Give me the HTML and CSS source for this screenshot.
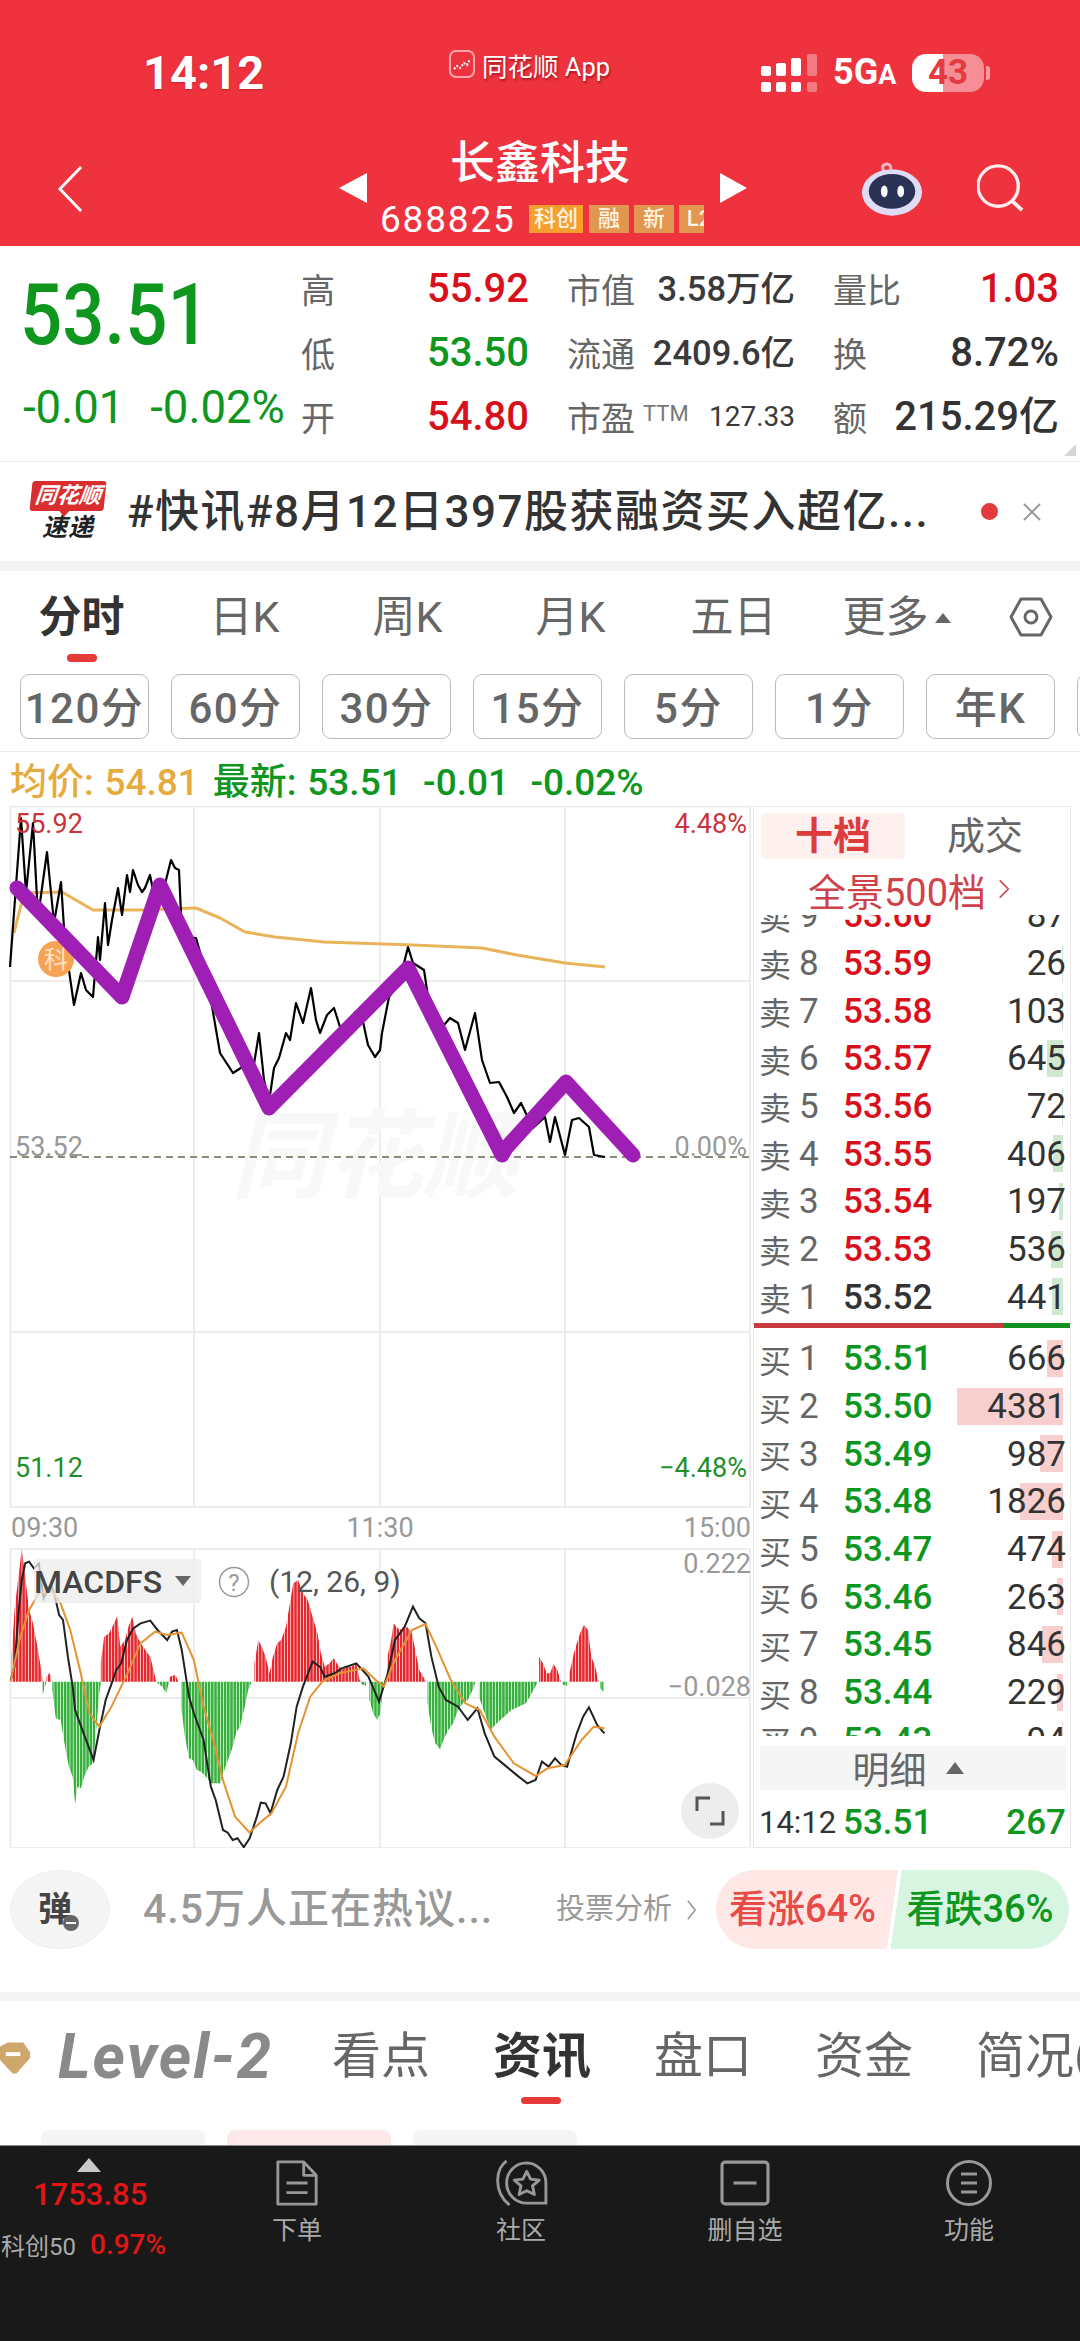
FILE: index.html
```html
<!DOCTYPE html>
<html lang="zh">
<head>
<meta charset="utf-8">
<title>长鑫科技</title>
<link rel="stylesheet" href="styles.css">
</head>
<body>
<div class="page">
  <header class="hero">
    <div class="status">
      <div class="time">14:12</div>
      <div class="appmark">
        <svg class="applogo" viewBox="0 0 26 28"><rect x="1" y="1" width="24" height="26" rx="6" fill="#ee3340" stroke="#f7a7a9" stroke-width="2"/><path d="M5 19l3-3 3 2 4-5 3 2 3-6" fill="none" stroke="#fff" stroke-width="2" stroke-dasharray="2 1.5"/></svg>
        <span>同花顺 App</span>
      </div>
      <div class="sys">
        <svg class="signal" viewBox="0 0 58 38"><g fill="#fff"><rect x="0" y="12" width="10" height="10" rx="2"/><rect x="15" y="9" width="10" height="13" rx="2"/><rect x="30" y="4" width="10" height="18" rx="2"/><rect x="0" y="28" width="10" height="10" rx="2"/><rect x="15" y="28" width="10" height="10" rx="2"/><rect x="30" y="28" width="10" height="10" rx="2"/></g><g fill="#fff" opacity=".35"><rect x="46" y="0" width="10" height="22" rx="2"/><rect x="46" y="28" width="10" height="10" rx="2"/></g></svg>
        <div class="net">5G<small>A</small></div>
        <div class="batt">43</div>
        <i class="batt-tip"></i>
      </div>
    </div>
    <nav class="navrow">
      <div class="nav-left">
        <svg class="back" viewBox="0 0 28 50"><path d="M25 2L3 25l22 23" fill="none" stroke="#fff" stroke-width="3"/></svg>
      </div>
      <div class="nav-mid">
        <i class="tri-left"></i>
        <div class="stock">
          <div class="stock-name">长鑫科技</div>
          <div class="stock-code"><span class="code">688825</span><span class="tag tag-a">科创</span><span class="tag">融</span><span class="tag">新</span><span class="tag tag-cut">L2</span></div>
        </div>
        <i class="tri-right"></i>
      </div>
      <div class="nav-right">
        <svg class="robot" viewBox="0 0 64 56"><path d="M28 13c-6-3-8-8-3-10 4-1 7 2 5 5" fill="none" stroke="#f6b6c4" stroke-width="3"/><ellipse cx="32" cy="32" rx="31" ry="24" fill="#dfdcf6"/><ellipse cx="32" cy="31" rx="24" ry="18" fill="#2a3256"/><ellipse cx="24" cy="31" rx="3.5" ry="6" fill="#fff"/><ellipse cx="41" cy="31" rx="3.5" ry="6" fill="#fff"/></svg>
        <svg class="search" viewBox="0 0 50 50"><circle cx="22" cy="23" r="21" fill="none" stroke="#ffecec" stroke-width="3.5"/><path d="M37 39l10 9" stroke="#ffecec" stroke-width="4" fill="none"/></svg>
      </div>
    </nav>
  </header>

  <section class="quote">
    <div class="quote-main">
      <div class="last">53.51</div>
      <div class="change"><span>-0.01</span><span>-0.02%</span></div>
    </div>
    <div class="stats">
      <div class="stat"><label>高</label><b class="up">55.92</b></div>
      <div class="stat"><label>市值</label><b class="mid">3.58万亿</b></div>
      <div class="stat"><label>量比</label><b class="up">1.03</b></div>
      <div class="stat"><label>低</label><b class="down">53.50</b></div>
      <div class="stat"><label>流通</label><b class="mid">2409.6亿</b></div>
      <div class="stat"><label>换</label><b class="dark">8.72%</b></div>
      <div class="stat"><label>开</label><b class="up">54.80</b></div>
      <div class="stat"><label>市盈<sup>TTM</sup></label><b class="small">127.33</b></div>
      <div class="stat"><label>额</label><b class="dark">215.29亿</b></div>
    </div>
    <i class="corner"></i>
  </section>

  <section class="news">
    <div class="newslogo"><div class="newslogo-top">同花顺</div><div class="newslogo-sub">速递</div></div>
    <div class="news-text">#快讯#8月12日397股获融资买入超亿...</div>
    <i class="news-dot"></i>
    <svg class="news-x" viewBox="0 0 18 18"><path d="M1 1l16 16M17 1L1 17" stroke="#999" stroke-width="2"/></svg>
  </section>

  <div class="band"></div>

  <div class="periods">
    <div class="period period-on">分时</div>
    <div class="period">日K</div>
    <div class="period">周K</div>
    <div class="period">月K</div>
    <div class="period">五日</div>
    <div class="period period-more">更多<i></i></div>
    <div class="period-gear"><svg viewBox="0 0 44 40"><path d="M12 2h20l10 18-10 18H12L2 20z" fill="none" stroke="#666" stroke-width="3" stroke-linejoin="round"/><circle cx="22" cy="20" r="6" fill="none" stroke="#666" stroke-width="3"/></svg></div>
  </div>

  <div class="pills">
    <div class="pill">120分</div><div class="pill">60分</div><div class="pill">30分</div><div class="pill">15分</div><div class="pill">5分</div><div class="pill">1分</div><div class="pill">年K</div><div class="pill"></div>
  </div>

  <div class="legend">
    <span class="legend-avg">均价: 54.81</span>
    <span class="legend-new">最新: 53.51&nbsp; -0.01&nbsp; -0.02%</span>
  </div>

  <section class="market">
    <svg class="chart" viewBox="0 806 752 1042">
      <defs>
        <pattern id="barsR" patternUnits="userSpaceOnUse" width="6.6" height="10"><rect width="5.2" height="10" fill="#e6272d"/></pattern>
        <pattern id="barsG" patternUnits="userSpaceOnUse" width="6.6" height="10"><rect width="5.2" height="10" fill="#35b13c"/></pattern>
      </defs>
      <g class="gridline">
        <path d="M10 806.5H750M10 981H750M10 1332H750M10 1507H750M10 1549H750M10 1698H750M10 1848H750"/>
        <path d="M10.5 806V1507M194 806V1507M380 806V1507M565 806V1507M750 806V1507M10.5 1549V1848M194 1549V1848M380 1549V1848M565 1549V1848M750 1549V1848"/>
      </g>
      <text class="watermark" x="231" y="1190">同花顺</text>
      <path class="zero" d="M10 1157H750"/>
      <polyline class="avgline" points="14,933 24,893 62,892 93,910 138,910 196,908 220,918 245,932 275,937 324,942 413,945 482,948 517,955 565,963 605,967"/>
      <polyline class="priceline" points="10,967 21,818 26,893 33,823 38,917 47,852 54,923 61,882 65,943 74,1005 81,973 86,990 93,997 98,937 100,960 105,903 108,945 112,920 118,888 122,915 127,875 130,892 133,870 138,885 142,892 145,888 150,875 155,900 162,893 166,880 171,860 175,868 179,870 182,937 196,938 207,977 220,1053 233,1073 250,1062 253,1070 259,1033 264,1080 269,1102 274,1068 279,1058 286,1033 290,1040 296,1003 303,1023 311,988 316,1020 320,1033 327,1015 334,1008 341,1030 348,1033 355,1012 362,1017 368,1045 375,1057 380,1050 382,1033 389,997 399,983 408,947 413,963 424,970 430,1010 444,1025 450,1018 458,1023 465,1050 475,1013 482,1060 490,1083 499,1082 507,1097 514,1113 521,1103 533,1128 545,1117 550,1142 555,1117 565,1155 572,1120 579,1118 589,1127 594,1155 605,1157"/>
      <circle class="badge" cx="56" cy="959" r="18"/>
      <text class="badge-text" x="44" y="968">科</text>
      <text class="ax ax-up" x="15" y="833">55.92</text>
      <text class="ax ax-up" x="747" y="833" text-anchor="end">4.48%</text>
      <text class="ax ax-mid" x="15" y="1156">53.52</text>
      <text class="ax ax-mid" x="747" y="1156" text-anchor="end">0.00%</text>
      <text class="ax ax-down" x="15" y="1477">51.12</text>
      <text class="ax ax-down" x="747" y="1477" text-anchor="end">−4.48%</text>
      <text class="ax ax-mid" x="11" y="1537">09:30</text>
      <text class="ax ax-mid" x="380" y="1537" text-anchor="middle">11:30</text>
      <text class="ax ax-mid" x="751" y="1537" text-anchor="end">15:00</text>
      <text class="ax ax-mid" x="751" y="1573" text-anchor="end">0.222</text>
      <text class="ax ax-mid" x="751" y="1696" text-anchor="end">−0.028</text>
      <g transform="translate(0 1500) scale(.4847 .3333)">
        <path fill="url(#barsR)" d="M24 545V470L30 330 38 230 45 148 52 230 60 330 68 370 76 430 84 500 88 545ZM96 545V530L103 518 106 545ZM208 545V485L215 410 225 400 232 380 242 348 248 440 258 420 265 380 273 350 280 400 290 430 300 450 310 470 320 530 322 545ZM350 545V530L362 525 368 545ZM525 545V490L533 420 540 440 548 470 556 520 563 470 572 430 580 420 590 380 597 320 605 250 615 240 625 280 635 300 645 350 655 400 662 460 670 500 680 490 688 475 695 490 705 510 715 500 725 500 735 490 742 540 745 545ZM800 545V465L807 420 812 370 820 385 830 390 840 380 850 400 858 460 865 510 875 535 878 545ZM1112 545V470L1120 490 1128 520 1135 520 1142 492 1150 510 1157 545ZM1175 545V520L1183 465 1190 430 1198 395 1205 375 1213 390 1220 470 1228 500 1235 545Z"/>
        <path fill="url(#barsG)" d="M88 545V583L95 548V545ZM108 545V570L115 655 125 660 133 730 142 800 150 830 155 912 160 860 167 865 175 825 183 800 192 790 198 700 204 590 208 550V545ZM325 545V550L335 560 343 580 348 550V545ZM374 545V625L382 715 390 775 398 780 406 810 415 815 425 830 435 850 445 850 455 850 465 800 478 750 488 695 495 680 505 620 512 570 518 550V545ZM745 545V552L755 558V545ZM762 545V600L770 640 778 660 785 640 790 560V545ZM882 545V608L890 685 898 730 908 748 915 720 925 690 935 670 945 630 955 610 965 600 975 570 980 550V545ZM988 545V590L1000 640 1012 690 1025 670 1040 650 1055 630 1070 620 1085 610 1095 585 1108 550V545ZM1160 545V553L1170 558V545ZM1238 545V565L1245 575V545Z"/>
        <polyline class="macd-dif" points="22,540 30,500 38,340 45,240 52,190 60,185 70,205 80,190 90,295 105,250 115,300 122,345 130,360 140,470 150,560 155,630 165,670 175,710 193,780 205,690 218,600 228,560 240,510 250,490 262,420 275,385 290,370 310,362 325,390 345,420 355,395 365,390 375,450 390,590 400,640 420,720 435,860 445,900 460,990 470,998 480,1020 490,1015 503,1042 515,1015 530,950 538,908 548,910 558,940 572,870 585,830 600,730 612,620 625,560 645,485 660,500 670,530 690,520 705,505 735,490 760,530 782,605 800,520 815,420 835,380 852,320 865,355 878,370 890,470 905,560 920,600 945,620 965,660 985,625 1000,700 1020,770 1045,800 1070,830 1088,850 1105,840 1118,785 1132,800 1145,775 1158,795 1170,800 1190,700 1203,650 1215,622 1232,675 1247,700"/>
        <polyline class="macd-dea" points="22,545 40,420 60,330 80,280 105,270 125,310 145,390 165,510 185,640 205,680 230,620 260,530 290,430 320,395 345,405 375,398 400,480 420,620 440,720 460,840 485,950 515,998 535,970 560,940 590,860 615,700 640,590 665,545 700,520 750,505 775,540 792,560 815,480 850,390 878,372 900,440 930,540 960,610 990,630 1020,710 1060,790 1105,828 1130,805 1165,795 1200,720 1225,680 1247,685"/>
      </g>
      <rect class="macd-chip" x="34" y="1559" width="167" height="44" rx="4"/>
      <text class="macd-name" x="34" y="1593">MACDFS</text>
      <path class="macd-caret" d="M175 1576h16l-8 10z"/>
      <circle class="macd-help" cx="234" cy="1582" r="14.5"/>
      <text class="macd-q" x="234" y="1591" text-anchor="middle">?</text>
      <text class="macd-param" x="269" y="1592">(12, 26, 9)</text>
      <polyline class="priceline-top" points="17,888 122,997 160,885 269,1108 408,968 502,1155 506,1148 566,1082 633,1155"/>
      <ellipse class="fs-btn" cx="710" cy="1811" rx="29" ry="28"/>
      <path class="fs-ico" d="M697 1811V1798H710M723 1811V1824H710"/>
    </svg>

    <div class="book">
      <div class="book-tabs"><div class="book-tab book-tab-on">十档</div><div class="book-tab">成交</div></div>
      <div class="book-all">全景500档 <svg viewBox="0 0 14 24"><path d="M2 2l10 10L2 22" fill="none" stroke="#d8494f" stroke-width="2"/></svg></div>
      <div class="levels levels-sell">
        <div class="lvl"><span class="lvl-name">卖<em>9</em></span><span class="lvl-price up">53.60</span><span class="lvl-qty">87</span></div>
        <div class="lvl"><span class="lvl-name">卖<em>8</em></span><span class="lvl-price up">53.59</span><span class="lvl-qty">26</span><i class="lvl-bar lvl-bar-s" style="width:1px"></i></div>
        <div class="lvl"><span class="lvl-name">卖<em>7</em></span><span class="lvl-price up">53.58</span><span class="lvl-qty">103</span><i class="lvl-bar lvl-bar-s" style="width:1px"></i></div>
        <div class="lvl"><span class="lvl-name">卖<em>6</em></span><span class="lvl-price up">53.57</span><span class="lvl-qty">645</span><i class="lvl-bar lvl-bar-s" style="width:16px"></i></div>
        <div class="lvl"><span class="lvl-name">卖<em>5</em></span><span class="lvl-price up">53.56</span><span class="lvl-qty">72</span><i class="lvl-bar lvl-bar-s" style="width:1px"></i></div>
        <div class="lvl"><span class="lvl-name">卖<em>4</em></span><span class="lvl-price up">53.55</span><span class="lvl-qty">406</span><i class="lvl-bar lvl-bar-s" style="width:10px"></i></div>
        <div class="lvl"><span class="lvl-name">卖<em>3</em></span><span class="lvl-price up">53.54</span><span class="lvl-qty">197</span><i class="lvl-bar lvl-bar-s" style="width:4px"></i></div>
        <div class="lvl"><span class="lvl-name">卖<em>2</em></span><span class="lvl-price up">53.53</span><span class="lvl-qty">536</span><i class="lvl-bar lvl-bar-s" style="width:12px"></i></div>
        <div class="lvl"><span class="lvl-name">卖<em>1</em></span><span class="lvl-price dark">53.52</span><span class="lvl-qty">441</span><i class="lvl-bar lvl-bar-s" style="width:11px"></i></div>
      </div>
      <div class="book-split"><i class="split-up"></i><i class="split-down"></i></div>
      <div class="levels levels-buy">
        <div class="lvl"><span class="lvl-name">买<em>1</em></span><span class="lvl-price down">53.51</span><span class="lvl-qty">666</span><i class="lvl-bar lvl-bar-b" style="width:16px"></i></div>
        <div class="lvl"><span class="lvl-name">买<em>2</em></span><span class="lvl-price down">53.50</span><span class="lvl-qty">4381</span><i class="lvl-bar lvl-bar-b" style="width:106px"></i></div>
        <div class="lvl"><span class="lvl-name">买<em>3</em></span><span class="lvl-price down">53.49</span><span class="lvl-qty">987</span><i class="lvl-bar lvl-bar-b" style="width:23px"></i></div>
        <div class="lvl"><span class="lvl-name">买<em>4</em></span><span class="lvl-price down">53.48</span><span class="lvl-qty">1826</span><i class="lvl-bar lvl-bar-b" style="width:43px"></i></div>
        <div class="lvl"><span class="lvl-name">买<em>5</em></span><span class="lvl-price down">53.47</span><span class="lvl-qty">474</span><i class="lvl-bar lvl-bar-b" style="width:11px"></i></div>
        <div class="lvl"><span class="lvl-name">买<em>6</em></span><span class="lvl-price down">53.46</span><span class="lvl-qty">263</span><i class="lvl-bar lvl-bar-b" style="width:6px"></i></div>
        <div class="lvl"><span class="lvl-name">买<em>7</em></span><span class="lvl-price down">53.45</span><span class="lvl-qty">846</span><i class="lvl-bar lvl-bar-b" style="width:21px"></i></div>
        <div class="lvl"><span class="lvl-name">买<em>8</em></span><span class="lvl-price down">53.44</span><span class="lvl-qty">229</span><i class="lvl-bar lvl-bar-b" style="width:6px"></i></div>
        <div class="lvl"><span class="lvl-name">买<em>9</em></span><span class="lvl-price down">53.43</span><span class="lvl-qty">94</span><i class="lvl-bar lvl-bar-b" style="width:1px"></i></div>
      </div>
      <div class="book-detail">明细<i></i></div>
      <div class="lvl lvl-last"><span class="lvl-time">14:12</span><span class="lvl-price down">53.51</span><span class="lvl-qty down">267</span></div>
    </div>
  </section>

  <section class="vote">
    <div class="danmu"><span>弹</span><i></i></div>
    <div class="vote-hot">4.5万人正在热议...</div>
    <div class="vote-link">投票分析<svg viewBox="0 0 12 24"><path d="M2 2l8 10-8 10" fill="none" stroke="#999" stroke-width="1.8"/></svg></div>
    <div class="vote-bar">
      <div class="vote-up">看涨64%</div>
      <div class="vote-down">看跌36%</div>
    </div>
  </section>

  <div class="band band-2"></div>

  <div class="infotabs">
    <svg class="gem" viewBox="0 0 32 32"><path d="M0 4L8 0H24L31 10V16L17 32H13L0 18Z" fill="#cfa76c"/><rect x="6" y="10" width="15" height="4" fill="#fff"/></svg>
    <div class="level2">Level-2</div>
    <div class="infotab">看点</div>
    <div class="infotab infotab-on">资讯</div>
    <div class="infotab">盘口</div>
    <div class="infotab">资金</div>
    <div class="infotab">简况(</div>
  </div>

  <div class="chips">
    <div class="chip"></div><div class="chip chip-on"></div><div class="chip"></div>
  </div>

  <footer class="dock">
    <div class="dock-index">
      <i class="dock-tri"></i>
      <div class="dock-val">1753.85</div>
      <div class="dock-line"><span>科创50</span><b>0.97%</b></div>
    </div>
    <div class="dock-item">
      <svg viewBox="0 0 46 48"><path d="M3 2h27l13 14v30H3zM30 2v14h13M12 24h22M12 34h22" fill="none" stroke="#989898" stroke-width="3" stroke-linejoin="round"/></svg>
      <span>下单</span>
    </div>
    <div class="dock-item">
      <svg viewBox="0 0 56 48"><path d="M34 3a21 21 0 0 0-21 21 21 21 0 0 0 21 21h20V24A21 21 0 0 0 34 3z" fill="none" stroke="#989898" stroke-width="3"/><path d="M13 1C2 8-2 32 16 47" fill="none" stroke="#989898" stroke-width="3"/><path d="M34 12l4 8 9 1-7 6 2 9-8-4-8 4 2-9-7-6 9-1z" fill="none" stroke="#989898" stroke-width="3" stroke-linejoin="round"/></svg>
      <span>社区</span>
    </div>
    <div class="dock-item">
      <svg viewBox="0 0 48 44"><rect x="2" y="2" width="44" height="40" rx="3" fill="none" stroke="#989898" stroke-width="3"/><path d="M13 22h22" stroke="#989898" stroke-width="3"/></svg>
      <span>删自选</span>
    </div>
    <div class="dock-item">
      <svg viewBox="0 0 46 46"><circle cx="23" cy="23" r="21.5" fill="none" stroke="#989898" stroke-width="3"/><path d="M15 14h16M15 23h16M15 32h16" stroke="#989898" stroke-width="3"/></svg>
      <span>功能</span>
    </div>
  </footer>
</div>
</body>
</html>
```

FILE: styles.css
```css
* { box-sizing: border-box; }
html, body { margin: 0; padding: 0; background: #fff; }
body { font-family: Roboto, "Noto Sans CJK SC", sans-serif; color: #333; }
i, em { font-style: normal; }
.page { width: 1080px; height: 2341px; overflow: hidden; display: flex; flex-direction: column; }

/* header */
.hero { height: 246px; background: #ee323e; color: #fff; flex: none; }
.status { height: 140px; display: flex; padding-left: 143px; position: relative; }
.time { width: 306px; font-size: 47px; font-weight: 700; line-height: 50px; padding-top: 48px; text-shadow: 0 1px 2px rgba(120,0,0,.35); }
.appmark { width: 312px; display: flex; align-items: center; height: 36px; margin-top: 46px; gap: 7px; font-size: 25.5px; text-shadow: 1px 2px 2px rgba(100,0,0,.5); white-space: nowrap; }
.applogo { width: 26px; height: 28px; }
.sys { display: flex; align-items: center; height: 38px; margin-top: 54px; }
.signal { width: 58px; height: 38px; }
.net { margin-left: 14px; width: 79px; font-size: 36px; font-weight: 700; line-height: 38px; white-space: nowrap; }
.net small { font-size: 27px; }
.batt { width: 72px; height: 38px; border-radius: 14px; background: linear-gradient(90deg, #fff 0 43%, rgba(255,255,255,.45) 43% 100%); color: #e53a42; font-size: 35px; font-weight: 700; line-height: 38px; text-align: center; }
.batt-tip { width: 4px; height: 14px; margin-left: 2px; background: rgba(255,255,255,.5); border-radius: 0 3px 3px 0; }
.navrow { height: 106px; display: flex; }
.nav-left { width: 339px; padding: 25px 0 0 57px; }
.back { width: 27px; height: 48px; display: block; }
.nav-mid { width: 408px; display: flex; align-items: flex-start; }
.tri-left, .tri-right { width: 0; height: 0; margin-top: 33px; border-top: 15px solid transparent; border-bottom: 15px solid transparent; }
.tri-left { border-right: 28px solid #fff; margin-right: 13px; }
.tri-right { border-left: 27px solid #fff; margin-left: 16px; }
.stock { width: 324px; }
.stock-name { font-size: 45px; line-height: 46px; text-align: center; font-weight: 500; padding-right: 4px; padding-top: 1px; height: 47px; }
.stock-code { display: flex; align-items: center; height: 28px; margin-top: 18px; overflow: hidden; white-space: nowrap; }
.code { font-size: 37px; letter-spacing: 1.8px; width: 149px; flex: none; }
.tag { flex: none; width: 40px; height: 28px; margin-right: 5px; background: #e2964f; color: #fff4e0; font-size: 22px; line-height: 28px; text-align: center; font-weight: 500; }
.tag-a { width: 54px; background: #f5a02e; margin-right: 6px; }
.nav-right { flex: 1; display: flex; align-items: flex-start; padding-left: 114px; }
.robot { width: 62px; height: 55px; margin-top: 21px; }
.search { width: 48px; height: 48px; margin: 24px 0 0 54px; }

/* quote */
.quote { height: 216px; flex: none; display: flex; position: relative; border-bottom: 1px solid #ececec; padding-top: 11px; }
.quote-main { width: 301px; padding-left: 20px; flex: none; }
.last { font-size: 85px; line-height: 90px; margin-top: 13px; color: #0e961e; font-weight: 500; transform: scaleX(.875); transform-origin: left center; }
.change { display: flex; gap: 26px; margin-top: 25px; padding-left: 3px; font-size: 45.5px; line-height: 46px; color: #0e961e; white-space: nowrap; }
.stats { display: grid; grid-template-columns: 228px 228px 226px; column-gap: 38px; grid-auto-rows: 64px; align-items: center; }
.stat { display: flex; justify-content: space-between; align-items: center; white-space: nowrap; }
.stat label { font-size: 34px; color: #666; line-height: 40px; padding-top: 3px; }
.stat sup { font-size: 22px; line-height: 0; vertical-align: 10px; margin-left: 8px; color: #777; }
.stat b { font-size: 40px; font-weight: 500; line-height: 44px; }
.stat b.mid { font-size: 34.5px; color: #3a3a3a; }
.stat b.small { font-size: 28px; font-weight: 400; color: #3a3a3a; }
.up { color: #d9101c; }
.down { color: #0e961e; }
.dark { color: #333; }
.corner { position: absolute; right: 4px; bottom: 5px; width: 0; height: 0; border-left: 12px solid transparent; border-bottom: 12px solid #d5d5d5; }

/* news */
.news { height: 99px; flex: none; display: flex; align-items: center; padding-left: 31px; position: relative; }
.newslogo { width: 74px; flex: none; text-align: center; }
.newslogo-top { position: relative; background: #d92d2e; color: #fff; font-size: 22px; line-height: 30px; font-style: italic; font-weight: 700; border-radius: 3px; transform: skewX(-6deg); }
.newslogo-top::after { content: ""; position: absolute; left: 30px; top: 30px; border-top: 6px solid #d92d2e; border-left: 5px solid transparent; border-right: 5px solid transparent; }
.newslogo-sub { color: #222; font-size: 25px; line-height: 28px; font-style: italic; font-weight: 700; margin-top: 3px; letter-spacing: 1px; }
.news-text { margin-left: 22px; width: 854px; flex: none; font-size: 44px; font-weight: 500; color: #333; letter-spacing: 1.5px; white-space: nowrap; line-height: 50px; }
.news-dot { width: 17px; height: 17px; background: #e23b3e; border-radius: 50%; flex: none; }
.news-x { width: 18px; height: 18px; margin-left: 25px; flex: none; }
.band { height: 10px; background: #f3f3f3; flex: none; }

/* periods */
.periods { height: 103px; flex: none; display: flex; }
.period { width: 163px; flex: none; text-align: center; font-size: 43px; line-height: 50px; padding-top: 21px; color: #666; position: relative; white-space: nowrap; }
.period-on { font-weight: 700; color: #333; }
.period-on::after { content: ""; position: absolute; left: 67px; top: 83px; width: 30px; height: 8px; border-radius: 4px; background: #e53a38; }
.period-more i { display: inline-block; width: 0; height: 0; margin: 0 0 5px 6px; vertical-align: middle; border-left: 8px solid transparent; border-right: 8px solid transparent; border-bottom: 10px solid #666; }
.period-gear { padding: 26px 0 0 31px; }
.period-gear svg { width: 44px; height: 40px; display: block; }
.pills { height: 78px; flex: none; display: flex; gap: 22px; padding-left: 20px; border-bottom: 1px solid #ececec; overflow: hidden; }
.pill { flex: none; width: 129px; height: 65px; border: 1.5px solid #bbb; border-radius: 9px; color: #666; font-size: 42px; font-weight: 500; line-height: 67px; text-align: center; white-space: nowrap; letter-spacing: 1.5px; }
.legend { height: 54px; flex: none; padding-left: 10px; display: flex; gap: 14px; align-items: center; font-size: 37px; font-weight: 500; white-space: nowrap; word-spacing: 1.5px; }
.legend-avg { color: #e5ab3c; }
.legend-new { color: #0e961e; }

/* chart */
.market { height: 1042px; flex: none; display: flex; }
.chart { width: 752px; height: 1042px; flex: none; display: block; }
.gridline path { stroke: #e8e8e8; stroke-width: 1.5; fill: none; }
.watermark { font-size: 96px; font-style: italic; font-weight: 700; fill: #f8f8f8; }
.zero { stroke: #8e8a7a; stroke-width: 2; stroke-dasharray: 7 5; fill: none; }
.avgline { fill: none; stroke: #e9b35a; stroke-width: 3; stroke-linejoin: round; }
.priceline { fill: none; stroke: #000; stroke-width: 2.2; stroke-linejoin: round; }
.priceline-top { fill: none; stroke: #9f1fb4; stroke-width: 15; stroke-linejoin: round; stroke-linecap: round; }
.badge { fill: #f6a355; }
.badge-text { font-size: 24px; fill: #ffe3c8; }
.ax { font-size: 27px; }
.ax-up { fill: #c8343c; }
.ax-mid { fill: #999; }
.ax-down { fill: #1f8f2a; }
.macd-dif { fill: none; stroke: #222; stroke-width: 2; vector-effect: non-scaling-stroke; }
.macd-dea { fill: none; stroke: #e59332; stroke-width: 2; vector-effect: non-scaling-stroke; }
.macd-chip { fill: #ececec; opacity: .75; }
.macd-name { font-size: 32px; font-weight: 500; fill: #444; }
.macd-caret { fill: #666; }
.macd-help { fill: none; stroke: #999; stroke-width: 1.5; }
.macd-q { font-size: 24px; fill: #999; }
.macd-param { font-size: 30px; fill: #555; }
.fs-btn { fill: #ededed; }
.fs-ico { fill: none; stroke: #555; stroke-width: 3; }

/* order book */
.book { width: 318px; margin-left: 1px; flex: none; border: 1.5px solid #e8e8e8; padding-top: 6px; }
.book-tabs { display: flex; height: 46px; padding-left: 7px; }
.book-tab { width: 144px; text-align: center; font-size: 38px; line-height: 46px; color: #666; }
.book-tab-on { background: #fdf0ef; border-radius: 5px; color: #dc3c3c; font-weight: 700; }
.book-tab + .book-tab { width: 160px; }
.book-all { height: 56px; padding-top: 4px; display: flex; align-items: center; justify-content: center; gap: 12px; color: #d0424a; font-size: 38px; white-space: nowrap; padding-right: 6px; }
.book-all svg { width: 12px; height: 22px; }
.levels { overflow: hidden; display: flex; flex-direction: column; }
.levels-sell { height: 406px; justify-content: flex-end; }
.levels-buy { height: 401px; margin-top: 7px; justify-content: flex-start; }
.lvl { position: relative; flex: none; height: 47.7px; display: flex; align-items: center; padding: 0 4px 0 5px; white-space: nowrap; }
.lvl-name { width: 84px; flex: none; font-size: 32px; color: #666; display: flex; align-items: center; gap: 8px; }
.lvl-name em { font-size: 35px; }
.lvl-price { font-size: 35px; font-weight: 500; position: relative; z-index: 1; }
.lvl-qty { margin-left: auto; font-size: 35px; color: #333; position: relative; z-index: 1; }
.lvl-bar { position: absolute; top: 5px; right: 7px; height: 37px; }
.lvl-bar-s { background: #cfe8cf; }
.lvl-bar-b { background: #f8cfcf; }
.book-split { height: 5px; margin-top: 2px; display: flex; }
.split-up { width: 250px; background: #c93a3e; }
.split-down { flex: 1; background: #12921f; }
.book-detail { height: 44px; margin: 10px 4px 0 6px; background: #f5f5f5; display: flex; align-items: center; justify-content: center; gap: 19px; font-size: 37px; color: #666; padding-right: 10px; }
.book-detail i { width: 0; height: 0; border-left: 9px solid transparent; border-right: 9px solid transparent; border-bottom: 12px solid #666; }
.lvl-last { margin-top: 9px; }
.lvl-time { width: 84px; flex: none; font-size: 31px; color: #333; white-space: nowrap; }
.lvl-qty.down { color: #0e961e; font-weight: 500; }

/* vote */
.vote { height: 144px; flex: none; display: flex; padding: 22px 0 0 10px; align-items: flex-start; }
.danmu { width: 100px; height: 79px; border-radius: 50%/50%; background: #f5f5f5; border: 1.5px solid #eee; position: relative; font-size: 34px; font-weight: 700; color: #444; line-height: 76px; padding-left: 27px; flex: none; }
.danmu i { position: absolute; left: 52px; top: 44px; width: 16px; height: 16px; border-radius: 50%; background: #666; }
.danmu i::after { content: ""; position: absolute; left: 3px; right: 3px; top: 7px; height: 2px; background: #fff; }
.vote-hot { width: 413px; margin-left: 33px; flex: none; font-size: 41px; font-weight: 500; color: #999; line-height: 79px; white-space: nowrap; letter-spacing: 1px; }
.vote-link { width: 160px; flex: none; font-size: 29px; color: #999; line-height: 79px; display: flex; align-items: center; gap: 14px; white-space: nowrap; }
.vote-link svg { width: 11px; height: 22px; }
.vote-bar { display: flex; width: 353px; height: 79px; flex: none; border-radius: 40px; background: linear-gradient(98deg, #fde8e6 0 50%, #fff 50% 51%, #d8f5e2 51% 100%); font-size: 38px; font-weight: 500; line-height: 79px; white-space: nowrap; }
.vote-up, .vote-down { width: 176px; flex: none; text-align: center; }
.vote-up { color: #e84a47; padding-right: 3px; }
.vote-down { color: #0e961e; }

/* lower tabs */
.band-2 { height: 9px; background: #f4f4f4; }
.infotabs { height: 104px; flex: none; display: flex; padding-top: 30px; position: relative; white-space: nowrap; }
.gem { width: 31px; height: 32px; margin-top: 11px; flex: none; }
.level2 { width: 301px; padding-left: 27px; font-size: 62px; font-weight: 700; font-style: italic; color: #8a8a8a; line-height: 52px; flex: none; letter-spacing: 2px; }
.infotab { width: 161px; flex: none; font-size: 49px; color: #666; line-height: 52px; }
.infotab-on { color: #333; font-weight: 700; position: relative; }
.infotab-on::after { content: ""; position: absolute; left: 28px; top: 66px; width: 40px; height: 7px; border-radius: 4px; background: #e53a38; }
.chips { height: 40px; flex: none; display: flex; gap: 22px; padding: 25px 0 0 41px; overflow: hidden; }
.chip { width: 164px; height: 40px; background: #f5f5f5; border-radius: 8px; }
.chip-on { background: #fde9e9; }

/* dock */
.dock { flex: 1; background: #191919; border-top: 1px solid #8a8a8a; display: grid; grid-template-columns: 185px repeat(4, 224px); position: relative; z-index: 2; }
.dock-index { position: relative; padding-top: 12px; white-space: nowrap; }
.dock-tri { display: block; width: 0; height: 0; margin-left: 77px; border-left: 12px solid transparent; border-right: 12px solid transparent; border-bottom: 14px solid #c8c8c8; }
.dock-val { font-size: 31px; line-height: 40px; margin: 3px 0 0 33px; color: #e01515; font-weight: 500; }
.dock-line { display: flex; align-items: center; margin-top: 12px; padding-left: 1px; }
.dock-line span { font-size: 24px; color: #aaa; width: 89px; }
.dock-line b { font-size: 28px; color: #e01515; font-weight: 500; }
.dock-item { display: flex; flex-direction: column; align-items: center; padding-top: 14px; }
.dock-item svg { height: 46px; width: 54px; display: block; }
.dock-item span { font-size: 25px; line-height: 32px; color: #aaa; margin-top: 9px; }
```
